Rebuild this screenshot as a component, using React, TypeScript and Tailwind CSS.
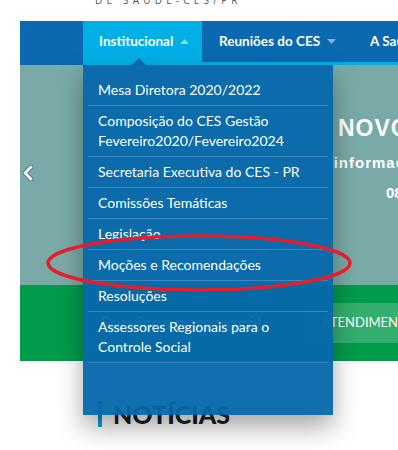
const menuItems = [
  ['Mesa Diretora 2020/2022'],
  ['Composição do CES Gestão', 'Fevereiro2020/Fevereiro2024'],
  ['Secretaria Executiva do CES - PR'],
  ['Comissões Temáticas'],
  ['Legislação'],
  ['Moções e Recomendações'],
  ['Resoluções'],
  ['Assessores Regionais para o', 'Controle Social'],
]

function Caret({ up, color }: { up?: boolean; color: string }) {
  return (
    <svg width="9" height="5" viewBox="0 0 9 5" className="shrink-0">
      <path d={up ? 'M0 5 L4.5 0 L9 5 Z' : 'M0 0 L4.5 5 L9 0 Z'} fill={color} />
    </svg>
  )
}

export default function App() {
  return (
    <div className="relative h-[450px] w-[398px] overflow-hidden bg-white font-['Lato',sans-serif]">
      {/* Site title, cut off at the top */}
      <div className="h-[21px] overflow-hidden">
        <div className="-mt-[5px] pl-[95px] font-['Open_Sans',sans-serif] text-[10px] leading-[10px] tracking-[4.2px] text-[#555]">
          DE SAÚDE-CES/PR
        </div>
      </div>

      <div className="relative ml-[20px]">
        {/* Main navigation */}
        <nav className="flex h-[44px] text-[13.5px] font-bold text-white">
          <div className="w-[63px] shrink-0 bg-[#0a69b0]" />
          <div className="flex w-[119px] shrink-0 items-center gap-[7px] bg-[#00afe6] pb-[4px] pl-[16px]">
            Institucional
            <Caret up color="#8bd6f3" />
          </div>
          <div className="flex min-w-0 flex-1 border-b-[3px] border-[#00afe6] bg-[#0a69b0] pb-[1px]">
            <div className="flex shrink-0 items-center gap-[7px] px-[17px] whitespace-nowrap">
              Reuniões do CES
              <Caret color="#86aed6" />
            </div>
            <div className="flex shrink-0 items-center whitespace-nowrap pl-[17px]">A Saúde</div>
          </div>
        </nav>

        {/* Carousel */}
        <div className="relative flex h-[220px] bg-[#7aaaa8] font-['Liberation_Sans',sans-serif] font-bold text-white">
          <div className="flex items-center pb-[5px] pl-[2px]">
            <svg width="12" height="16" viewBox="0 0 12 16">
              <path d="M9 2 L3 8 L9 14" fill="none" stroke="#2d5d8a" strokeWidth="4.5" strokeLinejoin="round" strokeLinecap="round" />
              <path d="M9 2 L3 8 L9 14" fill="none" stroke="#fff" strokeWidth="3" strokeLinejoin="round" strokeLinecap="round" />
            </svg>
          </div>
          <div className="flex flex-col pl-[304px] pt-[50px] whitespace-nowrap">
            <div className="text-[23px] leading-[26px] tracking-[1px]">NOVO</div>
            <div className="-ml-[46px] mt-[13px] text-[15px] leading-[18px] tracking-[1px]">
              <span className="text-[#8fb6c8]">Para </span>informações
            </div>
            <div className="ml-[48px] mt-[12px] text-[15px] leading-[18px]">08</div>
          </div>
        </div>

        {/* Services strip */}
        <div className="flex h-[76px] items-center bg-[#009b4b] pl-[80px] text-white">
          <div className="w-[205px] shrink-0 text-[19px] font-bold whitespace-nowrap">Serviços para você!</div>
          <div className="flex h-[40px] flex-1 items-center bg-[#34ae6e] pl-[17px] text-[13px] whitespace-nowrap">
            ATENDIMENTO
          </div>
        </div>

        {/* News heading */}
        <div className="flex items-center gap-[11px] pl-[78px] pt-[40px]">
          <div className="h-[26px] w-[4px] bg-gradient-to-b from-[#0a66b0] to-[#00b0e3]" />
          <div className="text-[25px] font-black leading-[26px] text-[#1c1c1c]">NOTÍCIAS</div>
        </div>

        {/* Institucional dropdown */}
        <div className="absolute left-[63px] top-[44px] h-[350px] w-[250px] bg-[#0567ab]/[0.95] px-[5px] pt-[10px] text-[14px] leading-[20px] text-white shadow-[0_12px_24px_rgba(0,0,0,0.35)]">
          <div className="absolute -top-[7px] left-[49px] h-0 w-0 border-x-[7px] border-b-[7px] border-x-transparent border-b-[#0567ab]" />
          {menuItems.map((lines) => (
            <div key={lines[0]} className="border-b border-[#3a87c1] px-[10px] py-[5px]">
              {lines.map((l) => (
                <div key={l}>{l}</div>
              ))}
            </div>
          ))}
        </div>
      </div>

      {/* Red annotation */}
      <svg className="pointer-events-none absolute left-0 top-0" width="398" height="450">
        <ellipse cx="199" cy="263" rx="151" ry="27" fill="none" stroke="#e61e2a" strokeWidth="3.5" />
      </svg>
    </div>
  )
}
